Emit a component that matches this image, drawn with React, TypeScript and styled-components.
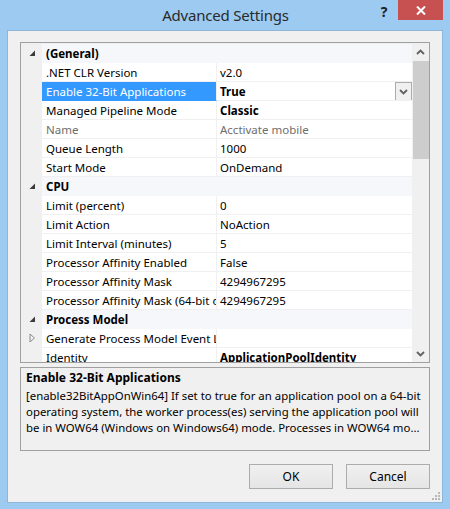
import { FC } from "react";
import styled, { createGlobalStyle } from "styled-components";

const GlobalStyle = createGlobalStyle`
  html, body {
    margin: 0;
    padding: 0;
    background: #9ccaf0;
  }
  * {
    box-sizing: border-box;
  }
`;

const FONT = `"Noto Sans", "Open Sans", "Liberation Sans", sans-serif`;

const Window = styled.div`
  width: 450px;
  height: 509px;
  background: #9ccaf0;
  display: flex;
  flex-direction: column;
  padding: 0 8px 8px 8px;
  font-family: ${FONT};
  font-size: 12px;
  color: #000;
`;

const TitleBar = styled.div`
  height: 31px;
  display: grid;
  grid-template-columns: 1fr auto 1fr;
  align-items: start;
  margin: 0 -1px 0 0;
`;

const Title = styled.div`
  grid-column: 2;
  font-size: 15px;
  line-height: 31px;
  color: #2b2b2b;
  letter-spacing: -0.2px;
`;

const Captions = styled.div`
  grid-column: 3;
  display: flex;
  justify-content: flex-end;
  align-items: flex-start;
`;

const HelpButton = styled.div`
  width: 28px;
  height: 22px;
  margin-top: 1px;
  font-size: 14px;
  font-weight: 700;
  color: #202020;
  text-align: center;
  line-height: 22px;
`;

const CloseButton = styled.div`
  width: 45px;
  height: 20px;
  background: #c75050;
  display: flex;
  align-items: center;
  justify-content: center;
`;

const Client = styled.div`
  position: relative;
  flex: 1;
  background: #f0f0f0;
  display: flex;
  flex-direction: column;
  padding: 11px 12px 13px 12px;
  box-shadow: 0 0 0 1px #8db6d8;
`;

const Grid = styled.div`
  height: 321px;
  border: 1px solid #a0a0a0;
  background: #fff;
  display: flex;
  overflow: hidden;
  font-size: 11.5px;
`;

const Rows = styled.div`
  flex: 1;
  padding-top: 1px;
  overflow: hidden;
  background: #f0f0f0;
`;

const Row = styled.div`
  height: 19px;
  display: flex;
`;

const Gutter = styled.div`
  width: 21px;
  flex: none;
  display: flex;
  align-items: center;
  justify-content: center;
  padding-left: 1px;
  padding-bottom: 1px;
`;

const CategoryCell = styled.div`
  flex: 1;
  background: #f5f7fb;
  font-weight: 700;
  padding: 2px 0 0 4px;
  line-height: 16px;
  border-bottom: 1px solid #f5f7fb;
`;

const NameCell = styled.div<{ $selected?: boolean; $disabled?: boolean }>`
  width: 175px;
  flex: none;
  padding: 2px 0 0 4px;
  line-height: 16px;
  white-space: nowrap;
  overflow: hidden;
  background: ${(p) => (p.$selected ? "#3399ff" : "#fff")};
  color: ${(p) => (p.$selected ? "#fff" : p.$disabled ? "#6d6d6d" : "#000")};
  border-bottom: 1px solid ${(p) => (p.$selected ? "#3399ff" : "#f0f0f0")};
  border-right: 1px solid #f0f0f0;
`;

const ValueCell = styled.div<{ $bold?: boolean; $disabled?: boolean }>`
  flex: 1;
  display: flex;
  justify-content: space-between;
  align-items: flex-start;
  padding-left: 3px;
  line-height: 16px;
  white-space: nowrap;
  overflow: hidden;
  background: #fff;
  font-weight: ${(p) => (p.$bold ? 700 : 400)};
  color: ${(p) => (p.$disabled ? "#6d6d6d" : "#000")};
  border-bottom: 1px solid #f0f0f0;
`;

const ValueText = styled.span`
  padding-top: 2px;
`;

const DropButton = styled.div`
  width: 17px;
  height: 19px;
  border: 1px solid #acacac;
  background: #f0f0f0;
  display: flex;
  align-items: center;
  justify-content: center;
`;

const ScrollBar = styled.div`
  width: 17px;
  flex: none;
  background: #f0f0f0;
  display: flex;
  flex-direction: column;
`;

const ScrollArrow = styled.div`
  height: 17px;
  display: flex;
  align-items: center;
  justify-content: center;
`;

const Thumb = styled.div`
  height: 98px;
  margin: 1px 0 0 1px;
  background: #cdcdcd;
`;

const ScrollSpace = styled.div`
  flex: 1;
`;

const Description = styled.div`
  height: 84px;
  margin-top: 4px;
  border: 1px solid #a0a0a0;
  background: #f0f0f0;
  padding: 2px 5px;
  white-space: nowrap;
  overflow: hidden;
`;

const DescTitle = styled.div`
  font-weight: 700;
  line-height: 16.5px;
  margin-bottom: 1px;
`;

const DescLine = styled.div`
  font-size: 11.4px;
  line-height: 16px;
`;

const ButtonRow = styled.div`
  margin-top: 13px;
  display: flex;
  justify-content: flex-end;
  gap: 13px;
`;

const Button = styled.div`
  width: 84px;
  height: 25px;
  border: 1px solid #acacac;
  background: linear-gradient(#f0f0f0, #e5e5e5);
  display: flex;
  align-items: center;
  justify-content: center;
  font-size: 12px;
`;

const Grip = styled.svg`
  position: absolute;
  right: 2px;
  bottom: 2px;
`;

type RowData =
  | { kind: "cat"; label: string }
  | {
      kind: "prop";
      name: string;
      value: string;
      bold?: boolean;
      disabled?: boolean;
      selected?: boolean;
      expandable?: boolean;
    };

const rows: RowData[] = [
  { kind: "cat", label: "(General)" },
  { kind: "prop", name: ".NET CLR Version", value: "v2.0" },
  { kind: "prop", name: "Enable 32-Bit Applications", value: "True", bold: true, selected: true },
  { kind: "prop", name: "Managed Pipeline Mode", value: "Classic", bold: true },
  { kind: "prop", name: "Name", value: "Acctivate mobile", disabled: true },
  { kind: "prop", name: "Queue Length", value: "1000" },
  { kind: "prop", name: "Start Mode", value: "OnDemand" },
  { kind: "cat", label: "CPU" },
  { kind: "prop", name: "Limit (percent)", value: "0" },
  { kind: "prop", name: "Limit Action", value: "NoAction" },
  { kind: "prop", name: "Limit Interval (minutes)", value: "5" },
  { kind: "prop", name: "Processor Affinity Enabled", value: "False" },
  { kind: "prop", name: "Processor Affinity Mask", value: "4294967295" },
  { kind: "prop", name: "Processor Affinity Mask (64-bit option)", value: "4294967295" },
  { kind: "cat", label: "Process Model" },
  { kind: "prop", name: "Generate Process Model Event Log Entry", value: "", expandable: true },
  { kind: "prop", name: "Identity", value: "ApplicationPoolIdentity", bold: true },
  { kind: "prop", name: "Idle Time-out (minutes)", value: "20" },
];

const Expanded = () => (
  <svg width="7" height="7" viewBox="0 0 7 7">
    <polygon points="6,0.5 6,6 0.5,6" fill="#3c3c3c" />
  </svg>
);

const Collapsed = () => (
  <svg width="7" height="10" viewBox="0 0 7 10">
    <polygon points="1,1 5.5,5 1,9" fill="none" stroke="#8a8a8a" strokeWidth="1" />
  </svg>
);

const Chevron: FC<{ up?: boolean; color?: string }> = ({ up, color = "#606060" }) => (
  <svg width="9" height="6" viewBox="0 0 9 6">
    <polyline
      points={up ? "1,5 4.5,1.5 8,5" : "1,1 4.5,4.5 8,1"}
      fill="none"
      stroke={color}
      strokeWidth="1.8"
    />
  </svg>
);

const App: FC = () => {
  return (
    <>
      <GlobalStyle />
      <Window>
        <TitleBar>
          <Title>Advanced Settings</Title>
          <Captions>
            <HelpButton>?</HelpButton>
            <CloseButton>
              <svg width="10" height="9" viewBox="0 0 10 9">
                <path d="M1 0.5 L9 8.5 M9 0.5 L1 8.5" stroke="#fff" strokeWidth="2" />
              </svg>
            </CloseButton>
          </Captions>
        </TitleBar>
        <Client>
          <Grid>
            <Rows>
              {rows.map((r, i) =>
                r.kind === "cat" ? (
                  <Row key={i}>
                    <Gutter>
                      <Expanded />
                    </Gutter>
                    <CategoryCell>{r.label}</CategoryCell>
                  </Row>
                ) : (
                  <Row key={i}>
                    <Gutter>{r.expandable && <Collapsed />}</Gutter>
                    <NameCell $selected={r.selected} $disabled={r.disabled}>
                      {r.name}
                    </NameCell>
                    <ValueCell $bold={r.bold} $disabled={r.disabled}>
                      <ValueText>{r.value}</ValueText>
                      {r.selected && (
                        <DropButton>
                          <Chevron />
                        </DropButton>
                      )}
                    </ValueCell>
                  </Row>
                )
              )}
            </Rows>
            <ScrollBar>
              <ScrollArrow>
                <Chevron up />
              </ScrollArrow>
              <Thumb />
              <ScrollSpace />
              <ScrollArrow>
                <Chevron />
              </ScrollArrow>
            </ScrollBar>
          </Grid>
          <Description>
            <DescTitle>Enable 32-Bit Applications</DescTitle>
            <DescLine>
              [enable32BitAppOnWin64] If set to true for an application pool on a 64-bit
            </DescLine>
            <DescLine>
              operating system, the worker process(es) serving the application pool will
            </DescLine>
            <DescLine>
              be in WOW64 (Windows on Windows64) mode. Processes in WOW64 mo...
            </DescLine>
          </Description>
          <ButtonRow>
            <Button>OK</Button>
            <Button>Cancel</Button>
          </ButtonRow>
          <Grip width="9" height="9" viewBox="0 0 9 9">
            {[
              [7, 1],
              [7, 4],
              [4, 4],
              [7, 7],
              [4, 7],
              [1, 7],
            ].map(([x, y], i) => (
              <rect key={i} x={x} y={y} width="2" height="2" fill="#b8b8b8" />
            ))}
          </Grip>
        </Client>
      </Window>
    </>
  );
};

export default App;
